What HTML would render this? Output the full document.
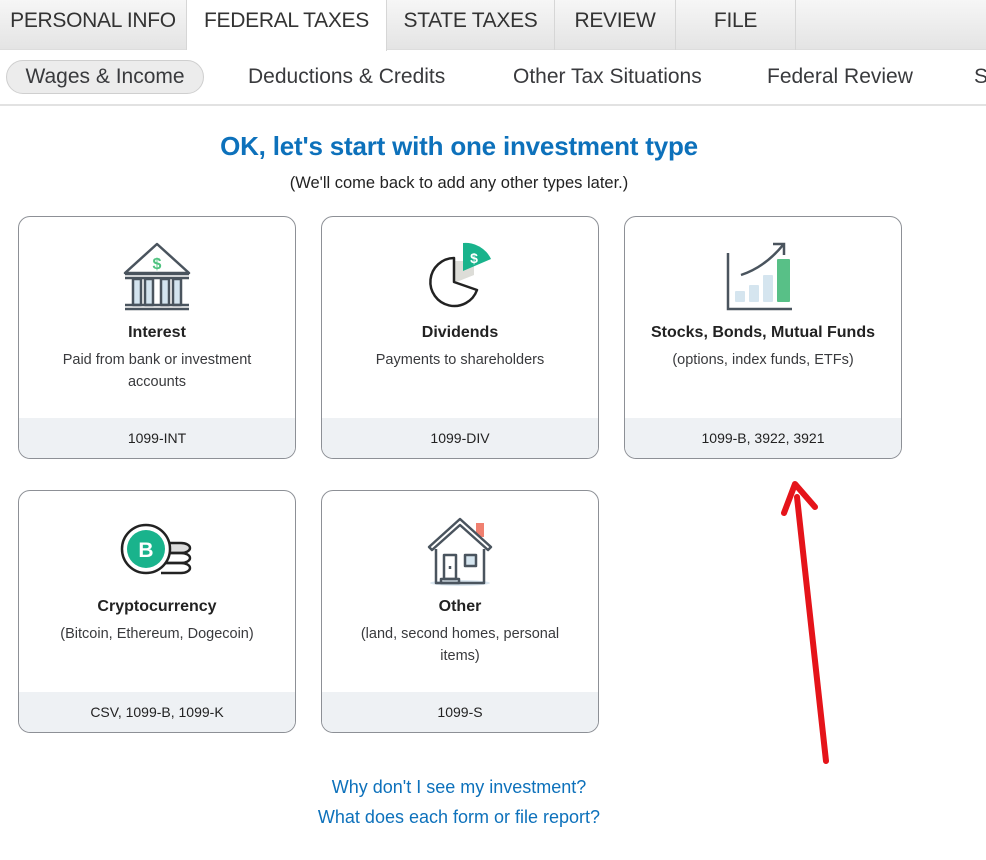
<!DOCTYPE html>
<html><head><meta charset="utf-8"><style>
*{box-sizing:border-box;margin:0;padding:0}
body{width:986px;height:860px;background:#fff;font-family:"Liberation Sans",sans-serif;color:#393a3d;position:relative;overflow:hidden}
.top{position:absolute;left:0;top:0;width:986px;height:50px;background:linear-gradient(#f6f6f6,#e4e4e4);border-bottom:1px solid #ddd}
.tab{position:absolute;top:0;height:50px;line-height:42px;font-size:21px;color:#333;text-align:center;border-right:1px solid #d6d6d6;letter-spacing:-0.3px;white-space:nowrap}
.tab.on{background:#fff;height:51px}
.sub{position:absolute;top:50px;left:0;width:986px;height:56px;border-bottom:2px solid #e2e2e2}
.sub span{position:absolute;top:12px;font-size:21px;color:#393a3d;line-height:30px;white-space:nowrap}
.pill{left:6px;width:198px;height:34px;top:10px!important;background:#ececec;border:1px solid #cfcfcf;border-radius:17px;text-align:center;line-height:32px!important}
h1{position:absolute;top:131px;left:0;width:918px;text-align:center;font-size:26px;color:#0d71bb;font-weight:bold;letter-spacing:-0.2px}
.subt{position:absolute;top:174px;left:0;width:918px;text-align:center;font-size:16.5px;color:#222}
.card{position:absolute;width:278px;height:243px;border:1px solid #8d9096;border-radius:12px;overflow:hidden;text-align:center}
.card .ic{position:absolute;left:0;top:22px;width:278px;height:76px}
.card b{position:absolute;top:107px;left:0;width:100%;font-size:16px;color:#222}
.card p{position:absolute;top:132px;left:20px;right:20px;font-size:14.5px;line-height:22px;color:#393a3d}
.card .ft{position:absolute;bottom:0;left:0;width:100%;height:40px;background:#eef1f4;line-height:40px;font-size:14px;color:#222}
.lnk{position:absolute;left:0;width:918px;text-align:center;font-size:18px;color:#0d71bb}
</style></head><body>
<div class="top">
<div class="tab" style="left:0;width:187px">PERSONAL INFO</div>
<div class="tab on" style="left:187px;width:200px">FEDERAL TAXES</div>
<div class="tab" style="left:387px;width:168px">STATE TAXES</div>
<div class="tab" style="left:555px;width:121px">REVIEW</div>
<div class="tab" style="left:676px;width:120px">FILE</div>
</div>
<div class="sub">
<span class="pill">Wages &amp; Income</span>
<span style="left:248px">Deductions &amp; Credits</span>
<span style="left:513px">Other Tax Situations</span>
<span style="left:767px">Federal Review</span>
<span style="left:974px">S</span>
</div>
<h1>OK, let's start with one investment type</h1>
<div class="subt">(We'll come back to add any other types later.)</div>

<div class="card" style="left:18px;top:216px">
<svg class="ic" viewBox="0 0 278 76"><g stroke="#4a545e" stroke-width="2.5" fill="none" stroke-linejoin="round">
<path d="M106 34 L138 5 L170 34 Z" fill="#fff"/><rect x="114" y="40" width="8" height="26" fill="#d4e4ef"/><rect x="126" y="40" width="8" height="26" fill="#d4e4ef"/><rect x="142" y="40" width="8" height="26" fill="#d4e4ef"/><rect x="154" y="40" width="8" height="26" fill="#d4e4ef"/>
<path d="M106 35 H170 M106 39 H170 M106 66 H170 M106 70 H170"/></g>
<text x="138" y="30" font-size="16" font-weight="bold" fill="#4ec27f" text-anchor="middle" font-family="Liberation Sans">$</text></svg>
<b>Interest</b><p>Paid from bank or investment accounts</p><div class="ft">1099-INT</div></div>

<div class="card" style="left:321px;top:216px">
<svg class="ic" viewBox="0 0 278 76"><path d="M132 22 L132 44 L152 36 L152 22 Z" fill="#ddddd8"/>
<path d="M132 19 A24 24 0 1 0 155 51 L132 43 Z" fill="none" stroke="#222" stroke-width="2.5" stroke-linejoin="round"/>
<path d="M141 32 L141 4 A28 28 0 0 1 169 20 Z" fill="#19b38c"/>
<text x="152" y="24" font-size="14" font-weight="bold" fill="#fff" text-anchor="middle" font-family="Liberation Sans">$</text></svg>
<b>Dividends</b><p>Payments to shareholders</p><div class="ft">1099-DIV</div></div>

<div class="card" style="left:624px;top:216px">
<svg class="ic" viewBox="0 0 278 76"><rect x="110" y="52" width="10" height="11" rx="1" fill="#d5e5ef"/><rect x="124" y="46" width="10" height="17" rx="1" fill="#d5e5ef"/><rect x="138" y="36" width="10" height="27" rx="1" fill="#d5e5ef"/><rect x="152" y="20" width="13" height="43" rx="1" fill="#58c087"/>
<path d="M103 14 V70 H167" stroke="#4a545e" stroke-width="2.5" fill="none"/><path d="M116 36 Q140 28 158 6 M148 5 H159 V16" stroke="#4a545e" stroke-width="2.5" fill="none"/></svg>
<b>Stocks, Bonds, Mutual Funds</b><p>(options, index funds, ETFs)</p><div class="ft">1099-B, 3922, 3921</div></div>

<div class="card" style="left:18px;top:490px">
<svg class="ic" viewBox="0 0 278 76"><g stroke="#222" stroke-width="2.5"><path d="M146 30 h16 a9 5 0 0 1 0 10 h-16" fill="#ddd"/><path d="M146 40 h16 a9 5 0 0 1 0 10 h-16" fill="none"/><path d="M146 50 h16 a9 5 0 0 1 0 10 h-20" fill="none"/></g>
<circle cx="127" cy="36" r="24" fill="#fff" stroke="#222" stroke-width="2.5"/><circle cx="127" cy="36" r="19" fill="#19b38c"/>
<text x="127" y="44" font-size="21" font-weight="bold" fill="#fff" text-anchor="middle" font-family="Liberation Sans">B</text></svg>
<b>Cryptocurrency</b><p>(Bitcoin, Ethereum, Dogecoin)</p><div class="ft">CSV, 1099-B, 1099-K</div></div>

<div class="card" style="left:321px;top:490px">
<svg class="ic" viewBox="0 0 278 76"><ellipse cx="138" cy="70" rx="30" ry="3" fill="#dbe7f0"/><rect x="154" y="10" width="8" height="14" fill="#f08070"/>
<g stroke="#4a545e" stroke-width="2.5" fill="none" stroke-linejoin="round"><path d="M107 34 L138 6 L169 34 L166 37 L138 12 L110 37 Z" fill="#fff"/><path d="M114 36 V70 H162 V36"/><rect x="122" y="42" width="12" height="24"/><rect x="119" y="66" width="18" height="4"/><rect x="143" y="42" width="11" height="11" fill="#d5e5ef"/><path d="M128 53 v3"/></g></svg>
<b>Other</b><p>(land, second homes, personal items)</p><div class="ft">1099-S</div></div>

<div class="lnk" style="top:777px">Why don't I see my investment?</div>
<div class="lnk" style="top:807px">What does each form or file report?</div>

<svg style="position:absolute;left:0;top:0" width="986" height="860"><path d="M826 761 L797 497" stroke="#e5141a" stroke-width="6" stroke-linecap="round"/><path d="M784 513 L795 484 L815 507" stroke="#e5141a" stroke-width="6" fill="none" stroke-linecap="round" stroke-linejoin="round"/></svg>
</body></html>
